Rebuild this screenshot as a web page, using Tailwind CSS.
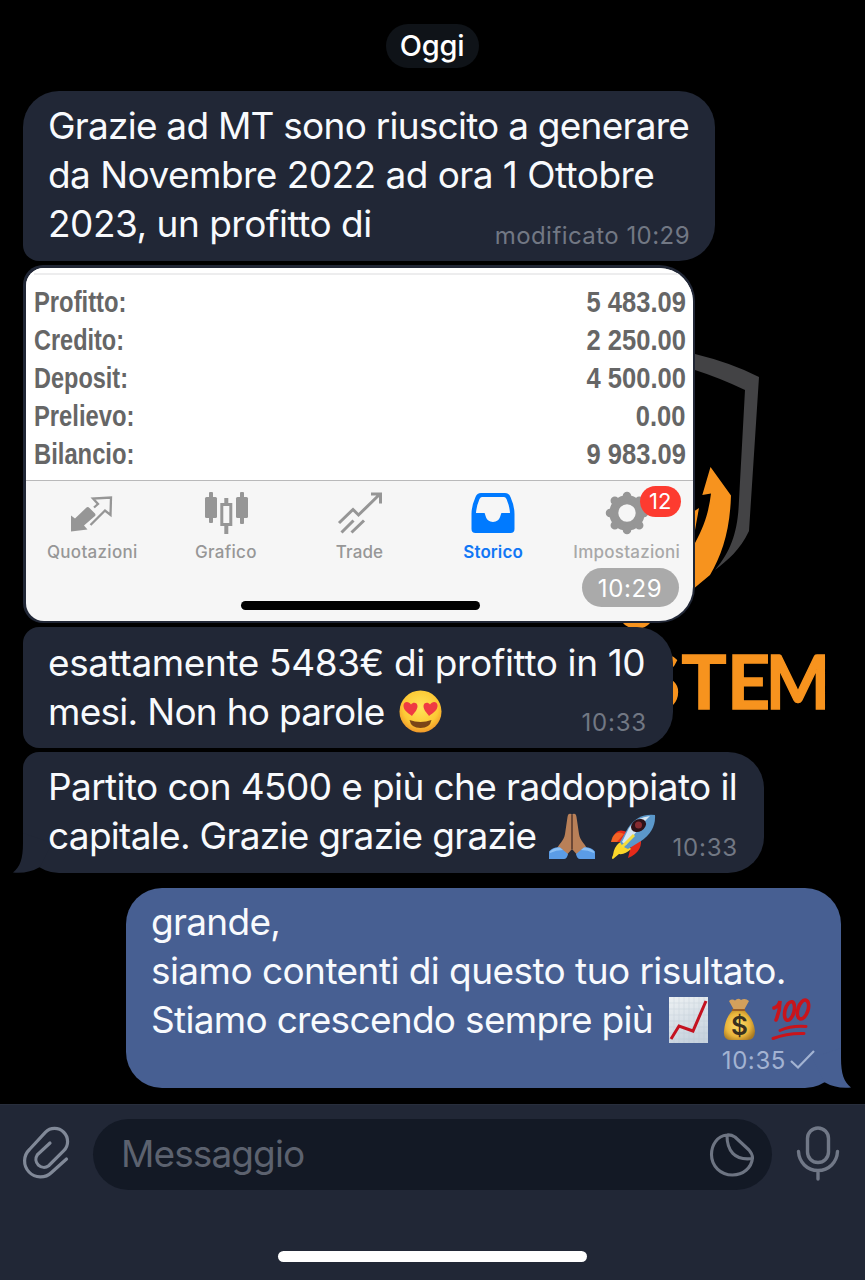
<!DOCTYPE html>
<html lang="it">
<head>
<meta charset="utf-8">
<title>Chat</title>
<script src="https://cdn.jsdelivr.net/npm/@tailwindcss/browser@4"></script>
</head>
<body class="bg-black">
<div class="relative flex h-[1280px] w-[865px] flex-col overflow-hidden bg-black font-['Inter',sans-serif] text-[37px] leading-[49px] text-[#f8fafd]">

  <!-- chat wallpaper -->
  <svg class="absolute left-0 top-0" width="865" height="1280" viewBox="0 0 865 1280" aria-hidden="true">
    <path fill="#434345" d="M680 348L695 354Q732 363 759 377L749 531C740 550 728 560 715 570C732 550 738 530 739 500L745 390Q720 378 695 370L680 366Z"/>
    <g fill="#f7931e">
      <path d="M710.500 467L731 495.500C730 530 722 555 710 575L695 587.500L680 595V560L695 543C705 525 709 510 711 493.500L702.300 495Z"/>
      <path d="M690 514L699 508L695 530L690 540Z"/>
      <path d="M618 618H655L648 625Q637 633 625 625Z"/>
      <g font-family="Lato" font-weight="700" font-size="75" stroke="#f7931e" stroke-width="1.500">
        <text y="709" x="639 681.500 727">STE</text>
        <text transform="translate(766 709) scale(.9 1)">M</text>
      </g>
    </g>
  </svg>

  <main class="relative flex h-[1104px] flex-col items-start pl-[23px] pt-6">
    <div class="ml-[363px] flex h-11 w-[93px] items-center justify-center rounded-full bg-[#0f1318] pb-[2px] pr-px text-[29px] font-medium leading-none tracking-[-0.2px] text-white">Oggi</div>

    <section class="mt-[23px] h-[170px] w-[692px] rounded-[36px] rounded-bl-[16px] bg-[#212736] pl-[25px] pr-[25px] pt-[10px]">
      <p class="whitespace-nowrap tracking-[-0.76px]">Grazie ad MT sono riuscito a generare</p>
      <p class="whitespace-nowrap tracking-[-0.54px]">da Novembre 2022 ad ora 1 Ottobre</p>
      <p class="flex justify-between whitespace-nowrap"><span class="tracking-[-0.5px]">2023, un profitto di</span><span class="pt-[12px] text-2xl leading-[49px] tracking-[0.45px] text-[#727884]">modificato 10:29</span></p>
    </section>

    <section class="mt-1 h-[358px] w-[672px] rounded-[36px] rounded-l-[20px] bg-[#212736] p-[2.5px]">
      <div class="flex h-full flex-col overflow-hidden rounded-[34px] rounded-l-[18px] bg-[#f6f6f6]">
        <div class="h-[212px] bg-white pt-[5px]">
          <div class="ml-2 h-[2px] bg-[#ededee]"></div>
          <dl class="flex flex-col pl-[8px] pr-[7px] pt-[8px] font-['Liberation_Sans',sans-serif] text-[29px] font-bold leading-[38px] text-[#666]">
            <div class="flex justify-between"><dt class="origin-left scale-x-[.82]">Profitto:</dt><dd class="origin-right scale-x-[.88]">5 483.09</dd></div>
            <div class="flex justify-between"><dt class="origin-left scale-x-[.81]">Credito:</dt><dd class="origin-right scale-x-[.88]">2 250.00</dd></div>
            <div class="flex justify-between"><dt class="origin-left scale-x-[.81]">Deposit:</dt><dd class="origin-right scale-x-[.88]">4 500.00</dd></div>
            <div class="flex justify-between"><dt class="origin-left scale-x-[.82]">Prelievo:</dt><dd class="origin-right scale-x-[.88]">0.00</dd></div>
            <div class="flex justify-between"><dt class="origin-left scale-x-[.82]">Bilancio:</dt><dd class="origin-right scale-x-[.88]">9 983.09</dd></div>
          </dl>
        </div>
        <div class="relative flex-1 border-t border-[#b9b9ba] text-[17px] font-medium leading-5 text-[#979797]">
          <nav class="-mr-px grid grid-cols-5 pt-2">
            <div class="flex flex-col items-center gap-[7px]">
              <svg width="46" height="46" viewBox="0 0 46 46"><path fill="#969696" d="M2 26.500L6 29.500L17.500 18.500Q19 17.500 20.500 19L26 24.500Q27 26 26 27L15 36.500L18.500 40.500L2 42.500Z"/><path fill="none" stroke="#969696" stroke-width="2.300" d="M25 18.500L29 15L24 9.500L42 8.500L41.500 26L36 21.500L21.500 36"/></svg>
              <span class="tracking-[0.3px]">Quotazioni</span>
            </div>
            <div class="flex flex-col items-center gap-[7px]">
              <svg width="46" height="46" viewBox="0 0 46 46" fill="#969696"><rect x="2" y="8" width="12" height="21" rx="1.500"/><rect x="6" y="3" width="4" height="31" rx="1"/><rect x="33" y="8" width="12" height="21" rx="1.500"/><rect x="37" y="3" width="4" height="32" rx="1"/><rect x="18.800" y="15.500" width="9" height="20" fill="none" stroke="#969696" stroke-width="3"/><path d="M21.300 9h4v6h-4zM21.300 36h4v9h-4z"/></svg>
              <span class="tracking-[0.3px]">Grafico</span>
            </div>
            <div class="flex flex-col items-center gap-[7px]">
              <svg width="46" height="46" viewBox="0 0 46 46" fill="none" stroke="#969696" stroke-width="3"><path d="M3 34L17 20.500L22.500 26L44 5M35 5H44.500V14.500M5.500 43.500L17.500 31.500M15.500 43.500L28 31.500"/></svg>
              <span class="tracking-[0.1px]">Trade</span>
            </div>
            <div class="flex flex-col items-center gap-[7px] text-[#1077f5]">
              <svg width="46" height="46" viewBox="0 0 46 46"><path fill="#007aff" fill-rule="evenodd" d="M11 4H35Q39 4 40.500 8Q44.500 17 44.500 25V40Q44.500 44 40.500 44H5.500Q1.500 44 1.500 40V25Q1.500 17 5.500 8Q7 4 11 4ZM12 8Q10.500 8 9.500 10Q6.500 17 6 24H14.500C15.500 24 15 33 23 33S30.500 24 31.500 24H40Q39.500 17 36.500 10Q35.500 8 34 8Z"/></svg>
              <span class="font-semibold tracking-[0.1px]">Storico</span>
            </div>
            <div class="flex flex-col items-center gap-[7px] text-[#a8a8a8]">
              <div class="relative h-[46px] w-[46px]">
                <svg width="46" height="46" viewBox="0 0 46 46"><g transform="translate(23 24)" fill="none"><circle r="13.200" stroke="#969696" stroke-width="9"/><path stroke="#969696" stroke-width="8.500" stroke-linecap="round" d="M0 -15V-17M0 15V17M-15 0H-17M15 0H17M10.600 -10.600L12.200 -12.200M-10.600 -10.600L-12.200 -12.200M10.600 10.600L12.200 12.200M-10.600 10.600L-12.200 12.200"/></g></svg>
                <span class="absolute left-[36px] top-[-3px] flex h-[31px] w-[41px] items-center justify-center rounded-full bg-[#fd3b30] pb-px text-[22px] font-normal text-white">12</span>
              </div>
              <span class="tracking-[0.25px]">Impostazioni</span>
            </div>
          </nav>
          <div class="ml-[215px] mt-[39px] h-[9px] w-[239px] rounded-full bg-black"></div>
          <span class="absolute bottom-[14px] right-[14px] flex h-[39px] w-[97px] items-center justify-center rounded-full bg-[#aaa] pt-[3px] text-2xl font-normal leading-none tracking-[0.6px] text-white">10:29</span>
        </div>
      </div>
    </section>

    <section class="mt-1 h-[121px] w-[650px] rounded-[36px] rounded-l-[16px] bg-[#212736] pl-[25px] pr-[26px] pt-[11px]">
      <p class="whitespace-nowrap tracking-[-0.39px]">esattamente 5483€ di profitto in 10</p>
      <div class="flex items-start whitespace-nowrap">
        <span class="w-[351px] tracking-[-0.72px]">mesi. Non ho parole</span>
        <svg width="43" height="43" viewBox="0 0 43 43" class="mt-[3px]" role="img" aria-label="😍"><defs><radialGradient id="face" cx=".5" cy=".4" r=".6"><stop offset="0" stop-color="#ffe55a"/><stop offset=".7" stop-color="#fdc935"/><stop offset="1" stop-color="#f0982a"/></radialGradient></defs><circle cx="21.500" cy="21.500" r="21" fill="url(#face)"/><path fill="#ef3b43" d="M13 26C9 23 4 20 4.500 15C5 11 10 11 12 14.500C14 11.500 18.500 12.500 18.500 16C18.500 20 15 23 13 26Z"/><path fill="#ef3b43" d="M30 26C34 23 39 20 38.500 15C38 11 33 11 31 14.500C29 11.500 24.500 12.500 24.500 16C24.500 20 28 23 30 26Z"/><path fill="#7a4517" d="M10.500 30Q21.500 34 32.500 30Q31 38 21.500 38T10.500 30Z"/></svg>
        <span class="ml-auto pt-[11px] text-2xl leading-[49px] tracking-[0.8px] text-[#727884]">10:33</span>
      </div>
    </section>

    <section class="relative mt-1 h-[121px] w-[741px] rounded-[36px] rounded-tl-[16px] bg-[#212736] pl-[25px] pr-[26px] pt-[10px]">
      <svg class="absolute -left-[11px] bottom-0" width="40" height="40" viewBox="0 0 40 40"><path fill="#212736" d="M11 0V10C11 26 8 34 1 39.500Q16 41 28 34L40 10Z"/></svg>
      <p class="relative whitespace-nowrap tracking-[-0.6px]">Partito con 4500 e più che raddoppiato il</p>
      <div class="relative flex items-start whitespace-nowrap">
        <span class="w-[501px] tracking-[-0.7px]">capitale. Grazie grazie grazie</span>
        <svg width="46" height="47" viewBox="0 0 46 47" class="mt-[2px]" role="img" aria-label="🙏"><path fill="#b98058" d="M22.500 1Q19 -.5 18.500 4L16 21C15 28 9 32 7 37L16 44L23 36L30 44L39 37C37 32 31 28 30 21L27.500 4Q27 -.5 23.500 1V36L22.500 36Z"/><path d="M23 2V36" stroke="#6c412c" stroke-width="1.200"/><path fill="#5b9ce6" d="M0 38.500Q5 33.500 11 34.500L19 41Q18 46 15 46H0ZM46 38.500Q41 33.500 35 34.500L27 41Q28 46 31 46H46Z"/><path fill="#8cc0f5" d="M1 38.500Q5 34.500 11 34.500L14 37Q7 37 1 40ZM45 38.500Q41 34.500 35 34.500L32 37Q39 37 45 40Z"/></svg>
        <svg width="46" height="46" viewBox="0 0 46 46" class="ml-[15px] mt-[3px]" role="img" aria-label="🚀"><path fill="#e62a1a" d="M14 17Q5 14 1 28L13 28L20 19ZM21 32L31 26Q32 38 18 44Z"/><path fill="#ff9a2e" d="M5 20Q9 17 14 20L7 28H1Q2 22 5 20Z" opacity=".5"/><path fill="#fbd62a" d="M9 29Q14 25 18 31L21 35Q15 41 9 40L3 45Q1 45 3 41Q4 33 9 29Z"/><path fill="#5b98cb" d="M45 1Q28 -1 18 14L10 28Q12 33 18 35L31 27Q46 17 45 1Z"/><path fill="#d7e6f2" d="M40 2Q27 3 19 14L12 28L16 31L27 17Q33 8 40 2Z"/><path d="M12 33L24 21" stroke="#f4dc3d" stroke-width="3"/><ellipse cx="28.500" cy="11.500" rx="8" ry="6" transform="rotate(-30 28.500 11.500)" fill="#2d1219"/><circle cx="28.500" cy="11" r="3.500" fill="#872b31"/></svg>
        <span class="ml-auto pt-[12px] text-2xl leading-[49px] tracking-[0.8px] text-[#727884]">10:33</span>
      </div>
    </section>

    <section class="relative ml-[103px] mt-[15px] h-[200px] w-[715px] rounded-[36px] bg-[#475f92] pl-[25px] pr-[25px] pt-[9px]">
      <svg class="absolute -right-[11px] bottom-0" width="40" height="40" viewBox="0 0 40 40"><path fill="#475f92" d="M29 0V10C29 26 32 34 39 39.500Q24 41 12 34L0 10Z"/></svg>
      <p class="relative whitespace-nowrap tracking-[-0.7px]">grande,</p>
      <p class="relative whitespace-nowrap tracking-[-0.56px]">siamo contenti di questo tuo risultato.</p>
      <div class="relative flex items-start whitespace-nowrap">
        <span class="w-[517px] tracking-[-0.7px]">Stiamo crescendo sempre più</span>
        <svg width="41" height="47" viewBox="0 0 41 47" class="mt-[2px]" role="img" aria-label="📈"><defs><linearGradient id="sheet" x2=".3" y2="1"><stop stop-color="#edf1f3"/><stop offset="1" stop-color="#c9d4df"/></linearGradient></defs><rect x="1" width="39" height="46" fill="url(#sheet)"/><path stroke="#b3c1ce" stroke-width=".5" opacity=".5" d="M6 0V46M11 0V46M16 0V46M21 0V46M26 0V46M31 0V46M36 0V46M1 6H40M1 12H40M1 18H40M1 24H40M1 30H40M1 36H40M1 42H40"/><path fill="none" stroke="#c41220" stroke-width="3" d="M3 42L11 29L25 34L38 4"/></svg>
        <svg width="33" height="43" viewBox="0 0 33 43" class="ml-[14px] mt-[3px]" role="img" aria-label="💰"><defs><radialGradient id="bag" cx=".45" cy=".5" r=".6"><stop stop-color="#ffe06c"/><stop offset=".65" stop-color="#e9b43b"/><stop offset="1" stop-color="#a87922"/></radialGradient></defs><path fill="#d3a05c" d="M6 3Q9 .5 12 2.500Q15 -.5 18 2Q22 -.5 26 3L21 12H11Z"/><path fill="url(#bag)" d="M10 12H21C26 17 31 23 32 33Q32 42 24 42H8Q0 42 1 33C2 23 5 17 10 12Z"/><path stroke="#9a5e26" stroke-width="2" d="M9 12H22"/><text x="16.500" y="37" text-anchor="middle" font-family="Inter" font-size="26" font-weight="600" fill="#38301f">$</text></svg>
        <svg width="42" height="43" viewBox="0 0 42 43" class="ml-[15px] mt-[3px]" role="img" aria-label="💯" fill="none" stroke="#c9141b" stroke-width="3.600" stroke-linecap="round"><path d="M3 10Q8 8 9 3Q9 13 5 22"/><ellipse cx="18.500" cy="13" rx="4.500" ry="9.500" transform="rotate(15 18.500 13)"/><ellipse cx="32" cy="11.500" rx="5" ry="9.800" transform="rotate(18 32 11.500)"/><path d="M9 32.500Q20 27.500 35 28.500M2 40.500Q16 35 33 35.500" stroke-width="3"/></svg>
      </div>
      <div class="relative mt-px flex h-[30px] items-center justify-end pr-px text-2xl leading-none text-[#a3b3d2]"><span class="pt-px tracking-[0.6px]">10:35</span>
        <svg width="25" height="22" viewBox="0 0 25 22" class="ml-1" fill="none" stroke="#a3b3d2" stroke-width="2.200"><path d="M1 12L8 18.500L24 2"/></svg></div>
    </section>
  </main>

  <footer class="relative flex h-[176px] flex-col items-center border-t border-[#282e3c] bg-[#212736]">
    <div class="flex w-full items-start pl-[22px] pt-[14px]">
      <svg width="50" height="54" viewBox="0 0 50 54" class="mt-[7px]" fill="none" stroke="#818998" stroke-width="3.200" stroke-linecap="round"><path d="M28 17L15.300 28.800A8 8 0 0 0 26.700 39.700L41.800 24.700A13 13 0 0 0 23.300 6.300L7.500 23.500A15.500 15.500 0 0 0 29.500 46.500L44.500 33"/></svg>
      <div class="ml-[21px] flex h-[71px] w-[679px] items-center justify-between rounded-full bg-[#131925] pl-[28px] pr-[17px] text-[#5c626f]">
        <span class="pb-[2px] tracking-[-0.9px]">Messaggio</span>
        <svg width="46" height="46" viewBox="0 0 46 46" fill="none" stroke="#6d7482" stroke-width="3.100" stroke-linejoin="round"><path d="M18 3C8 4 2.500 13 2.500 22.500C2.500 34 11.500 43 23.500 43C34 43 42.500 36 43.500 26Q43.500 22 40 18L26 5Q22 2.500 18 3ZM18 3.500C18 18 25 29 43.500 26.500"/></svg>
      </div>
      <svg width="44" height="56" viewBox="0 0 44 56" class="ml-[24px] mt-[7px]" fill="none" stroke="#717887" stroke-width="3.400" stroke-linecap="round"><rect x="11.500" y="2" width="21" height="34.500" rx="10.500"/><path d="M2.500 25.500C3 36 11 44.500 22 44.500S41 36 41.500 25.500M22 44.500V53"/></svg>
    </div>
    <div class="mt-auto mb-[18px] h-[11px] w-[309px] rounded-full bg-white"></div>
  </footer>
</div>
</body>
</html>
